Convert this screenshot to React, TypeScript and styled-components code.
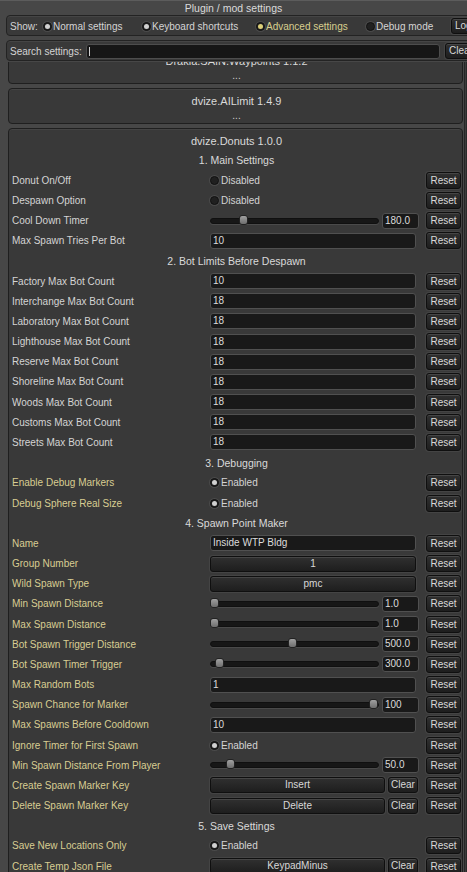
import React from "react";
import styled, { createGlobalStyle } from "styled-components";

const GlobalStyle = createGlobalStyle`
  html, body {
    margin: 0;
    padding: 0;
    height: 872px;
    overflow: hidden;
    background: #474747;
  }
  body {
    font-family: "Liberation Sans", Arial, sans-serif;
    font-size: 10px;
    color: #d4d4d4;
  }
`;

type Row =
  | { kind: "header"; text: string }
  | { kind: "toggle"; label: string; on: boolean; adv?: boolean }
  | { kind: "slider"; label: string; pos: number; value: string; adv?: boolean }
  | { kind: "text"; label: string; value: string; adv?: boolean }
  | { kind: "choice"; label: string; value: string; adv?: boolean }
  | { kind: "key"; label: string; value: string; adv?: boolean };

const maps = [
  "Factory",
  "Interchange",
  "Laboratory",
  "Lighthouse",
  "Reserve",
  "Shoreline",
  "Woods",
  "Customs",
  "Streets",
];

const rows: Row[] = [
  { kind: "header", text: "1. Main Settings" },
  { kind: "toggle", label: "Donut On/Off", on: false },
  { kind: "toggle", label: "Despawn Option", on: false },
  { kind: "slider", label: "Cool Down Timer", pos: 0.18, value: "180.0" },
  { kind: "text", label: "Max Spawn Tries Per Bot", value: "10" },
  { kind: "header", text: "2. Bot Limits Before Despawn" },
  ...maps.map(
    (m, i): Row => ({ kind: "text", label: `${m} Max Bot Count`, value: i === 0 ? "10" : "18" })
  ),
  { kind: "header", text: "3. Debugging" },
  { kind: "toggle", label: "Enable Debug Markers", on: true, adv: true },
  { kind: "toggle", label: "Debug Sphere Real Size", on: true, adv: true },
  { kind: "header", text: "4. Spawn Point Maker" },
  { kind: "text", label: "Name", value: "Inside WTP Bldg", adv: true },
  { kind: "choice", label: "Group Number", value: "1", adv: true },
  { kind: "choice", label: "Wild Spawn Type", value: "pmc", adv: true },
  { kind: "slider", label: "Min Spawn Distance", pos: 0, value: "1.0", adv: true },
  { kind: "slider", label: "Max Spawn Distance", pos: 0, value: "1.0", adv: true },
  { kind: "slider", label: "Bot Spawn Trigger Distance", pos: 0.49, value: "500.0", adv: true },
  { kind: "slider", label: "Bot Spawn Timer Trigger", pos: 0.03, value: "300.0", adv: true },
  { kind: "text", label: "Max Random Bots", value: "1", adv: true },
  { kind: "slider", label: "Spawn Chance for Marker", pos: 1, value: "100", adv: true },
  { kind: "text", label: "Max Spawns Before Cooldown", value: "10", adv: true },
  { kind: "toggle", label: "Ignore Timer for First Spawn", on: true, adv: true },
  { kind: "slider", label: "Min Spawn Distance From Player", pos: 0.1, value: "50.0", adv: true },
  { kind: "key", label: "Create Spawn Marker Key", value: "Insert", adv: true },
  { kind: "key", label: "Delete Spawn Marker Key", value: "Delete", adv: true },
  { kind: "header", text: "5. Save Settings" },
  { kind: "toggle", label: "Save New Locations Only", on: true, adv: true },
  { kind: "key", label: "Create Temp Json File", value: "KeypadMinus", adv: true },
];

const Radio = ({ on, yellow }: { on?: boolean; yellow?: boolean }) => (
  <RadioCircle $on={on} $yellow={yellow} />
);

const ControlCell = ({ row }: { row: Row }) => {
  switch (row.kind) {
    case "toggle":
      return (
        <ToggleWrap>
          <Radio on={row.on} />
          <span>{row.on ? "Enabled" : "Disabled"}</span>
        </ToggleWrap>
      );
    case "slider":
      return (
        <SliderWrap>
          <Track>
            <Thumb style={{ left: `calc(${row.pos} * (100% - 8px) - 1px)` }} />
          </Track>
          <NumberBox>{row.value}</NumberBox>
        </SliderWrap>
      );
    case "text":
      return <TextBox>{row.value}</TextBox>;
    case "choice":
      return <ChoiceButton>{row.value}</ChoiceButton>;
    case "key":
      return (
        <KeyWrap>
          <KeyButton>{row.value}</KeyButton>
          <SmallButton>Clear</SmallButton>
        </KeyWrap>
      );
    default:
      return null;
  }
};

const App = () => {
  return (
    <>
      <GlobalStyle />
      <Window>
        <TitleBar>Plugin / mod settings</TitleBar>
        <BarBox>
          <BarLabel $w={33}>Show:</BarLabel>
          <ShowToggle $w={99}>
            <Radio on />
            <span>Normal settings</span>
          </ShowToggle>
          <ShowToggle $w={114}>
            <Radio on />
            <span>Keyboard shortcuts</span>
          </ShowToggle>
          <ShowToggle $w={110} $yellow>
            <Radio on yellow />
            <span>Advanced settings</span>
          </ShowToggle>
          <ShowToggle $w={85}>
            <Radio />
            <span>Debug mode</span>
          </ShowToggle>
          <BarButton $gap={0}>Log</BarButton>
        </BarBox>
        <BarBox>
          <BarLabel $w={76}>Search settings:</BarLabel>
          <SearchInput />
          <BarButton $gap={5}>Clear</BarButton>
        </BarBox>
        <ScrollArea>
          <ScrollContent>
            <Panel>
              <PanelTitle>Drakia.SAIN.Waypoints 1.1.2</PanelTitle>
              <Dots>...</Dots>
            </Panel>
            <Panel>
              <PanelTitle>dvize.AILimit 1.4.9</PanelTitle>
              <Dots>...</Dots>
            </Panel>
            <Panel>
              <PanelTitle>dvize.Donuts 1.0.0</PanelTitle>
              {rows.map((row, i) =>
                row.kind === "header" ? (
                  <SectionHeader key={i}>{row.text}</SectionHeader>
                ) : (
                  <SettingRow key={i}>
                    <Label $adv={row.adv}>{row.label}</Label>
                    <Control>
                      <ControlCell row={row} />
                    </Control>
                    <ResetButton>Reset</ResetButton>
                  </SettingRow>
                )
              )}
            </Panel>
          </ScrollContent>
          <ScrollBar />
        </ScrollArea>
      </Window>
    </>
  );
};

const Window = styled.div`
  height: 872px;
  display: flex;
  flex-direction: column;
  border-top: 1px solid #5c5c5c;
  box-sizing: border-box;
  overflow: hidden;
`;

const TitleBar = styled.div`
  height: 14px;
  line-height: 14px;
  text-align: center;
  font-size: 10.5px;
  color: #dadada;
`;

const BarBox = styled.div`
  flex: none;
  width: 500px;
  height: 21px;
  margin: 0 0 4px 6px;
  box-sizing: border-box;
  display: flex;
  align-items: center;
  padding: 1px 0 0 3px;
  background: #393939;
  border: 1px solid #232323;
  border-radius: 4px;
  box-shadow: inset 0 1px 0 #454545;
`;

const BarLabel = styled.span<{ $w: number }>`
  flex: none;
  width: ${(p) => p.$w}px;
  white-space: nowrap;
  color: #d4d4d4;
`;

const ShowToggle = styled.div<{ $w: number; $yellow?: boolean }>`
  width: ${(p) => p.$w}px;
  flex: none;
  display: flex;
  align-items: center;
  gap: 1px;
  white-space: nowrap;
  color: ${(p) => (p.$yellow ? "#d8cf8e" : "#d4d4d4")};
`;

const RadioCircle = styled.span<{ $on?: boolean; $yellow?: boolean }>`
  flex: none;
  width: 9px;
  height: 9px;
  box-sizing: border-box;
  border-radius: 50%;
  background: #202020;
  border: 1px solid #111;
  box-shadow: 0 0 0 1px #4a4a4a;
  position: relative;

  &::after {
    content: "";
    position: absolute;
    left: 1px;
    top: 1px;
    width: 5px;
    height: 5px;
    border-radius: 50%;
    background: ${(p) => (p.$yellow ? "#dccf78" : "#d0d0d0")};
    display: ${(p) => (p.$on ? "block" : "none")};
  }
`;

const buttonLook = `
  box-sizing: border-box;
  background: linear-gradient(#303030, #1e1e1e);
  border: 1px solid #0f0f0f;
  border-radius: 3px;
  box-shadow: inset 0 1px 0 #464646, 0 0 0 1px #444;
  color: #d8d8d8;
  font-family: inherit;
  font-size: 10px;
  text-align: center;
  white-space: nowrap;
`;

const BarButton = styled.div<{ $gap: number }>`
  ${buttonLook}
  flex: none;
  height: 16px;
  line-height: 14px;
  padding: 0 3px;
  margin-left: ${(p) => p.$gap}px;
`;

const SearchInput = styled.div`
  flex: none;
  width: 354px;
  height: 15px;
  box-sizing: border-box;
  background: #161616;
  border: 1px solid #4d4d4d;
  border-radius: 3px;
  position: relative;

  &::before {
    content: "";
    position: absolute;
    left: 2px;
    top: 2px;
    width: 1px;
    height: 9px;
    background: #d0d0d0;
  }
`;

const ScrollArea = styled.div`
  flex: 1;
  min-height: 0;
  display: flex;
  margin: -3px 0 0 8px;
  overflow: hidden;
`;

const ScrollContent = styled.div`
  width: 455px;
  flex: none;
  margin-top: -14px;
  display: flex;
  flex-direction: column;
  gap: 4px;
`;

const ScrollBar = styled.div`
  flex: 1;
  margin-left: 1px;
  border-left: 1px solid #262626;
  border-right: 1px solid #2a2a2a;
  background: #3c3c3c;
`;

const Panel = styled.div`
  box-sizing: border-box;
  background: #393939;
  border: 1px solid #1f1f1f;
  border-radius: 4px;
  padding: 3px 1px 0 3px;
  box-shadow: inset 0 1px 0 #444;
`;

const PanelTitle = styled.div`
  height: 18px;
  line-height: 18px;
  text-align: center;
  font-size: 11px;
  color: #dadada;
`;

const Dots = styled.div`
  height: 13px;
  line-height: 11px;
  text-align: center;
  font-size: 10px;
  color: #d0d0d0;
`;

const SectionHeader = styled.div`
  height: 20.18px;
  line-height: 20px;
  text-align: center;
  font-size: 10.5px;
  color: #dadada;
`;

const SettingRow = styled.div`
  height: 20.18px;
  display: flex;
  align-items: center;
`;

const Label = styled.div<{ $adv?: boolean }>`
  flex: none;
  width: 198px;
  color: ${(p) => (p.$adv ? "#d8cd92" : "#d4d4d4")};
  white-space: nowrap;
`;

const Control = styled.div`
  flex: none;
  width: 209px;
  margin-right: 7px;
`;

const ToggleWrap = styled.div`
  display: flex;
  align-items: center;
  gap: 2px;
  color: #d4d4d4;
`;

const SliderWrap = styled.div`
  display: flex;
  align-items: center;
  gap: 3px;
`;

const Track = styled.div`
  flex: 1;
  height: 4px;
  border-radius: 3px;
  background: #171717;
  border: 1px solid #101010;
  box-shadow: 0 1px 0 #4a4a4a;
  position: relative;
`;

const Thumb = styled.div`
  position: absolute;
  top: -4px;
  width: 9px;
  height: 10px;
  box-sizing: border-box;
  border-radius: 3px;
  background: linear-gradient(#a0a0a0, #6e6e6e);
  border: 1px solid #222;
`;

const fieldLook = `
  box-sizing: border-box;
  height: 16px;
  line-height: 14px;
  background: #191919;
  border: 1px solid #505050;
  border-radius: 3px;
  padding: 0 2px;
  color: #dcdcdc;
  white-space: nowrap;
  overflow: hidden;
`;

const NumberBox = styled.div`
  ${fieldLook}
  width: 37px;
  flex: none;
`;

const TextBox = styled.div`
  ${fieldLook}
  width: calc(100% - 3px);
`;

const ChoiceButton = styled.div`
  ${buttonLook}
  width: calc(100% - 3px);
  height: 16px;
  line-height: 14px;
`;

const KeyWrap = styled.div`
  display: flex;
  align-items: center;
  gap: 3px;
`;

const KeyButton = styled.div`
  ${buttonLook}
  width: 175px;
  height: 16px;
  line-height: 14px;
`;

const SmallButton = styled.div`
  ${buttonLook}
  width: 30px;
  height: 16px;
  line-height: 14px;
`;

const ResetButton = styled.div`
  ${buttonLook}
  flex: none;
  width: 35px;
  height: 17px;
  line-height: 15px;
`;

export default App;
